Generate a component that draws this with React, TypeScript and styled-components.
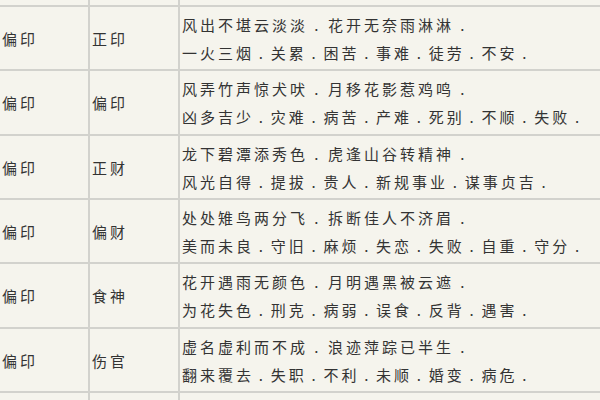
import styled, { createGlobalStyle } from "styled-components";

type Row = {
  day: string;
  god: string;
  verse: string;
  notes: string;
};

const rows: Row[] = [
  {
    day: "偏印",
    god: "正印",
    verse: "风出不堪云淡淡 . 花开无奈雨淋淋 .",
    notes: "一火三烟 . 关累 . 困苦 . 事难 . 徒劳 . 不安 .",
  },
  {
    day: "偏印",
    god: "偏印",
    verse: "风弄竹声惊犬吠 . 月移花影惹鸡鸣 .",
    notes: "凶多吉少 . 灾难 . 病苦 . 产难 . 死别 . 不顺 . 失败 .",
  },
  {
    day: "偏印",
    god: "正财",
    verse: "龙下碧潭添秀色 . 虎逢山谷转精神 .",
    notes: "风光自得 . 提拔 . 贵人 . 新规事业 . 谋事贞吉 .",
  },
  {
    day: "偏印",
    god: "偏财",
    verse: "处处雉鸟两分飞 . 拆断佳人不济眉 .",
    notes: "美而未良 . 守旧 . 麻烦 . 失恋 . 失败 . 自重 . 守分 .",
  },
  {
    day: "偏印",
    god: "食神",
    verse: "花开遇雨无颜色 . 月明遇黑被云遮 .",
    notes: "为花失色 . 刑克 . 病弱 . 误食 . 反背 . 遇害 .",
  },
  {
    day: "偏印",
    god: "伤官",
    verse: "虚名虚利而不成 . 浪迹萍踪已半生 .",
    notes: "翻来覆去 . 失职 . 不利 . 未顺 . 婚变 . 病危 .",
  },
];

const GlobalStyle = createGlobalStyle`
  html, body {
    margin: 0;
    padding: 0;
    background: #f5f4ed;
    overflow: hidden;
  }
`;

const Page = styled.div`
  width: 600px;
  height: 400px;
  overflow: hidden;
  background: #f5f4ed;
`;

const Table = styled.table`
  border-collapse: separate;
  border-spacing: 0;
  width: 720px;
  margin-left: -1px;
  table-layout: fixed;
  font-family: "Noto Sans CJK SC", "Noto Sans", sans-serif;
  font-size: 15px;
  letter-spacing: 3px;
  color: #333;
`;

const Cell = styled.td<{ $narrow?: boolean }>`
  box-sizing: border-box;
  width: ${(p) => (p.$narrow ? "90px" : "auto")};
  height: 64.33px;
  padding: 4px 2px 2px;
  border: 1px solid #d2d2cd;
  vertical-align: middle;
  line-height: 28px;
  white-space: nowrap;
`;

const StubCell = styled.td<{ $narrow?: boolean }>`
  box-sizing: border-box;
  width: ${(p) => (p.$narrow ? "90px" : "auto")};
  height: 6px;
  padding: 0;
  border: 1px solid #d2d2cd;
  border-top: none;
`;

const Line = styled.div<{ $tight?: boolean }>`
  display: block;
  word-spacing: ${(p) => (p.$tight ? "-1.6px" : "0")};
`;

export default function App() {
  return (
    <Page>
      <GlobalStyle />
      <Table>
        <tbody>
          <tr>
            <StubCell $narrow />
            <StubCell $narrow />
            <StubCell />
          </tr>
          {rows.map((r, i) => (
            <tr key={i}>
              <Cell $narrow>{r.day}</Cell>
              <Cell $narrow>{r.god}</Cell>
              <Cell>
                <Line>{r.verse}</Line>
                <Line $tight>{r.notes}</Line>
              </Cell>
            </tr>
          ))}
          <tr>
            <Cell $narrow />
            <Cell $narrow />
            <Cell />
          </tr>
        </tbody>
      </Table>
    </Page>
  );
}
